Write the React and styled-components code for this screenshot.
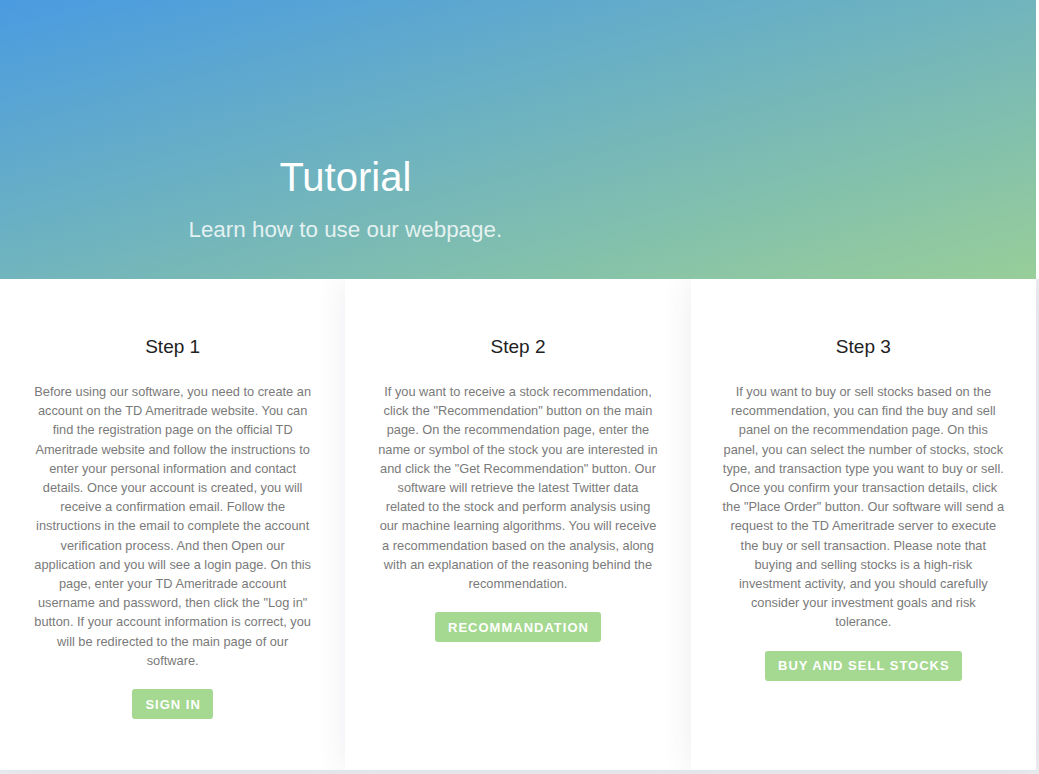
import React from "react";
import styled, { createGlobalStyle } from "styled-components";

const GlobalStyle = createGlobalStyle`
  * {
    box-sizing: border-box;
  }
  body {
    margin: 0;
    background: #ffffff;
    font-family: "Liberation Sans", Arial, sans-serif;
  }
`;

const steps = [
  {
    title: "Step 1",
    text: 'Before using our software, you need to create an account on the TD Ameritrade website. You can find the registration page on the official TD Ameritrade website and follow the instructions to enter your personal information and contact details. Once your account is created, you will receive a confirmation email. Follow the instructions in the email to complete the account verification process. And then Open our application and you will see a login page. On this page, enter your TD Ameritrade account username and password, then click the "Log in" button. If your account information is correct, you will be redirected to the main page of our software.',
    action: "Sign in",
  },
  {
    title: "Step 2",
    text: 'If you want to receive a stock recommendation, click the "Recommendation" button on the main page. On the recommendation page, enter the name or symbol of the stock you are interested in and click the "Get Recommendation" button. Our software will retrieve the latest Twitter data related to the stock and perform analysis using our machine learning algorithms. You will receive a recommendation based on the analysis, along with an explanation of the reasoning behind the recommendation.',
    action: "Recommandation",
  },
  {
    title: "Step 3",
    text: 'If you want to buy or sell stocks based on the recommendation, you can find the buy and sell panel on the recommendation page. On this panel, you can select the number of stocks, stock type, and transaction type you want to buy or sell. Once you confirm your transaction details, click the "Place Order" button. Our software will send a request to the TD Ameritrade server to execute the buy or sell transaction. Please note that buying and selling stocks is a high-risk investment activity, and you should carefully consider your investment goals and risk tolerance.',
    action: "Buy and sell stocks",
  },
];

const App = () => {
  return (
    <>
      <GlobalStyle />
      <Page>
        <Hero>
          <HeroText>
            <HeroTitle>Tutorial</HeroTitle>
            <HeroSubtitle>Learn how to use our webpage.</HeroSubtitle>
          </HeroText>
        </Hero>
        <StepsSection>
          <StepsRow>
            {steps.map((step) => (
              <StepCard key={step.title}>
                <StepTitle>{step.title}</StepTitle>
                <StepText>{step.text}</StepText>
                <StepButton type="button">{step.action}</StepButton>
              </StepCard>
            ))}
          </StepsRow>
        </StepsSection>
      </Page>
    </>
  );
};

export default App;

const Page = styled.div`
  width: 100%;
`;

const Hero = styled.header`
  position: relative;
  z-index: 1;
  width: 1036px;
  height: 279px;
  padding: 154px 0 36px;
  display: grid;
  grid-template-columns: 2fr 1fr;
  background: linear-gradient(to bottom right, #4a9be1, #98ce99);
`;

const HeroText = styled.div`
  display: flex;
  flex-direction: column;
  align-items: center;
  text-align: center;
`;

const HeroTitle = styled.h1`
  margin: 0;
  font-size: 40px;
  line-height: 46px;
  font-weight: 400;
  color: #ffffff;
`;

const HeroSubtitle = styled.p`
  margin: 17px 0 0;
  font-size: 22.4px;
  line-height: 26px;
  color: rgba(255, 255, 255, 0.82);
`;

const StepsSection = styled.section`
  background: #eceef1;
  padding-bottom: 4px;
`;

const StepsRow = styled.div`
  width: 1036px;
  display: grid;
  grid-template-columns: repeat(3, 1fr);
`;

const StepCard = styled.article`
  position: relative;
  min-height: 491px;
  padding: 56px 0 0;
  display: flex;
  flex-direction: column;
  align-items: center;
  background: #ffffff;
  box-shadow: 0 0 30px rgba(40, 50, 90, 0.09);
`;

const StepTitle = styled.h2`
  margin: 0;
  font-size: 19px;
  line-height: 23px;
  font-weight: 400;
  color: #222222;
`;

const StepText = styled.p`
  width: 282.5px;
  margin: 24px 0 0;
  font-size: 12.8px;
  line-height: 19.2px;
  text-align: center;
  color: #7a7a7a;
`;

const StepButton = styled.button`
  margin-top: 19px;
  height: 30px;
  padding: 0 12px 0 13px;
  border: none;
  border-radius: 3px;
  background: #a5d890;
  color: #ffffff;
  font-family: "Liberation Sans", Arial, sans-serif;
  font-size: 13px;
  font-weight: 700;
  letter-spacing: 1px;
  text-transform: uppercase;
  cursor: pointer;
`;
